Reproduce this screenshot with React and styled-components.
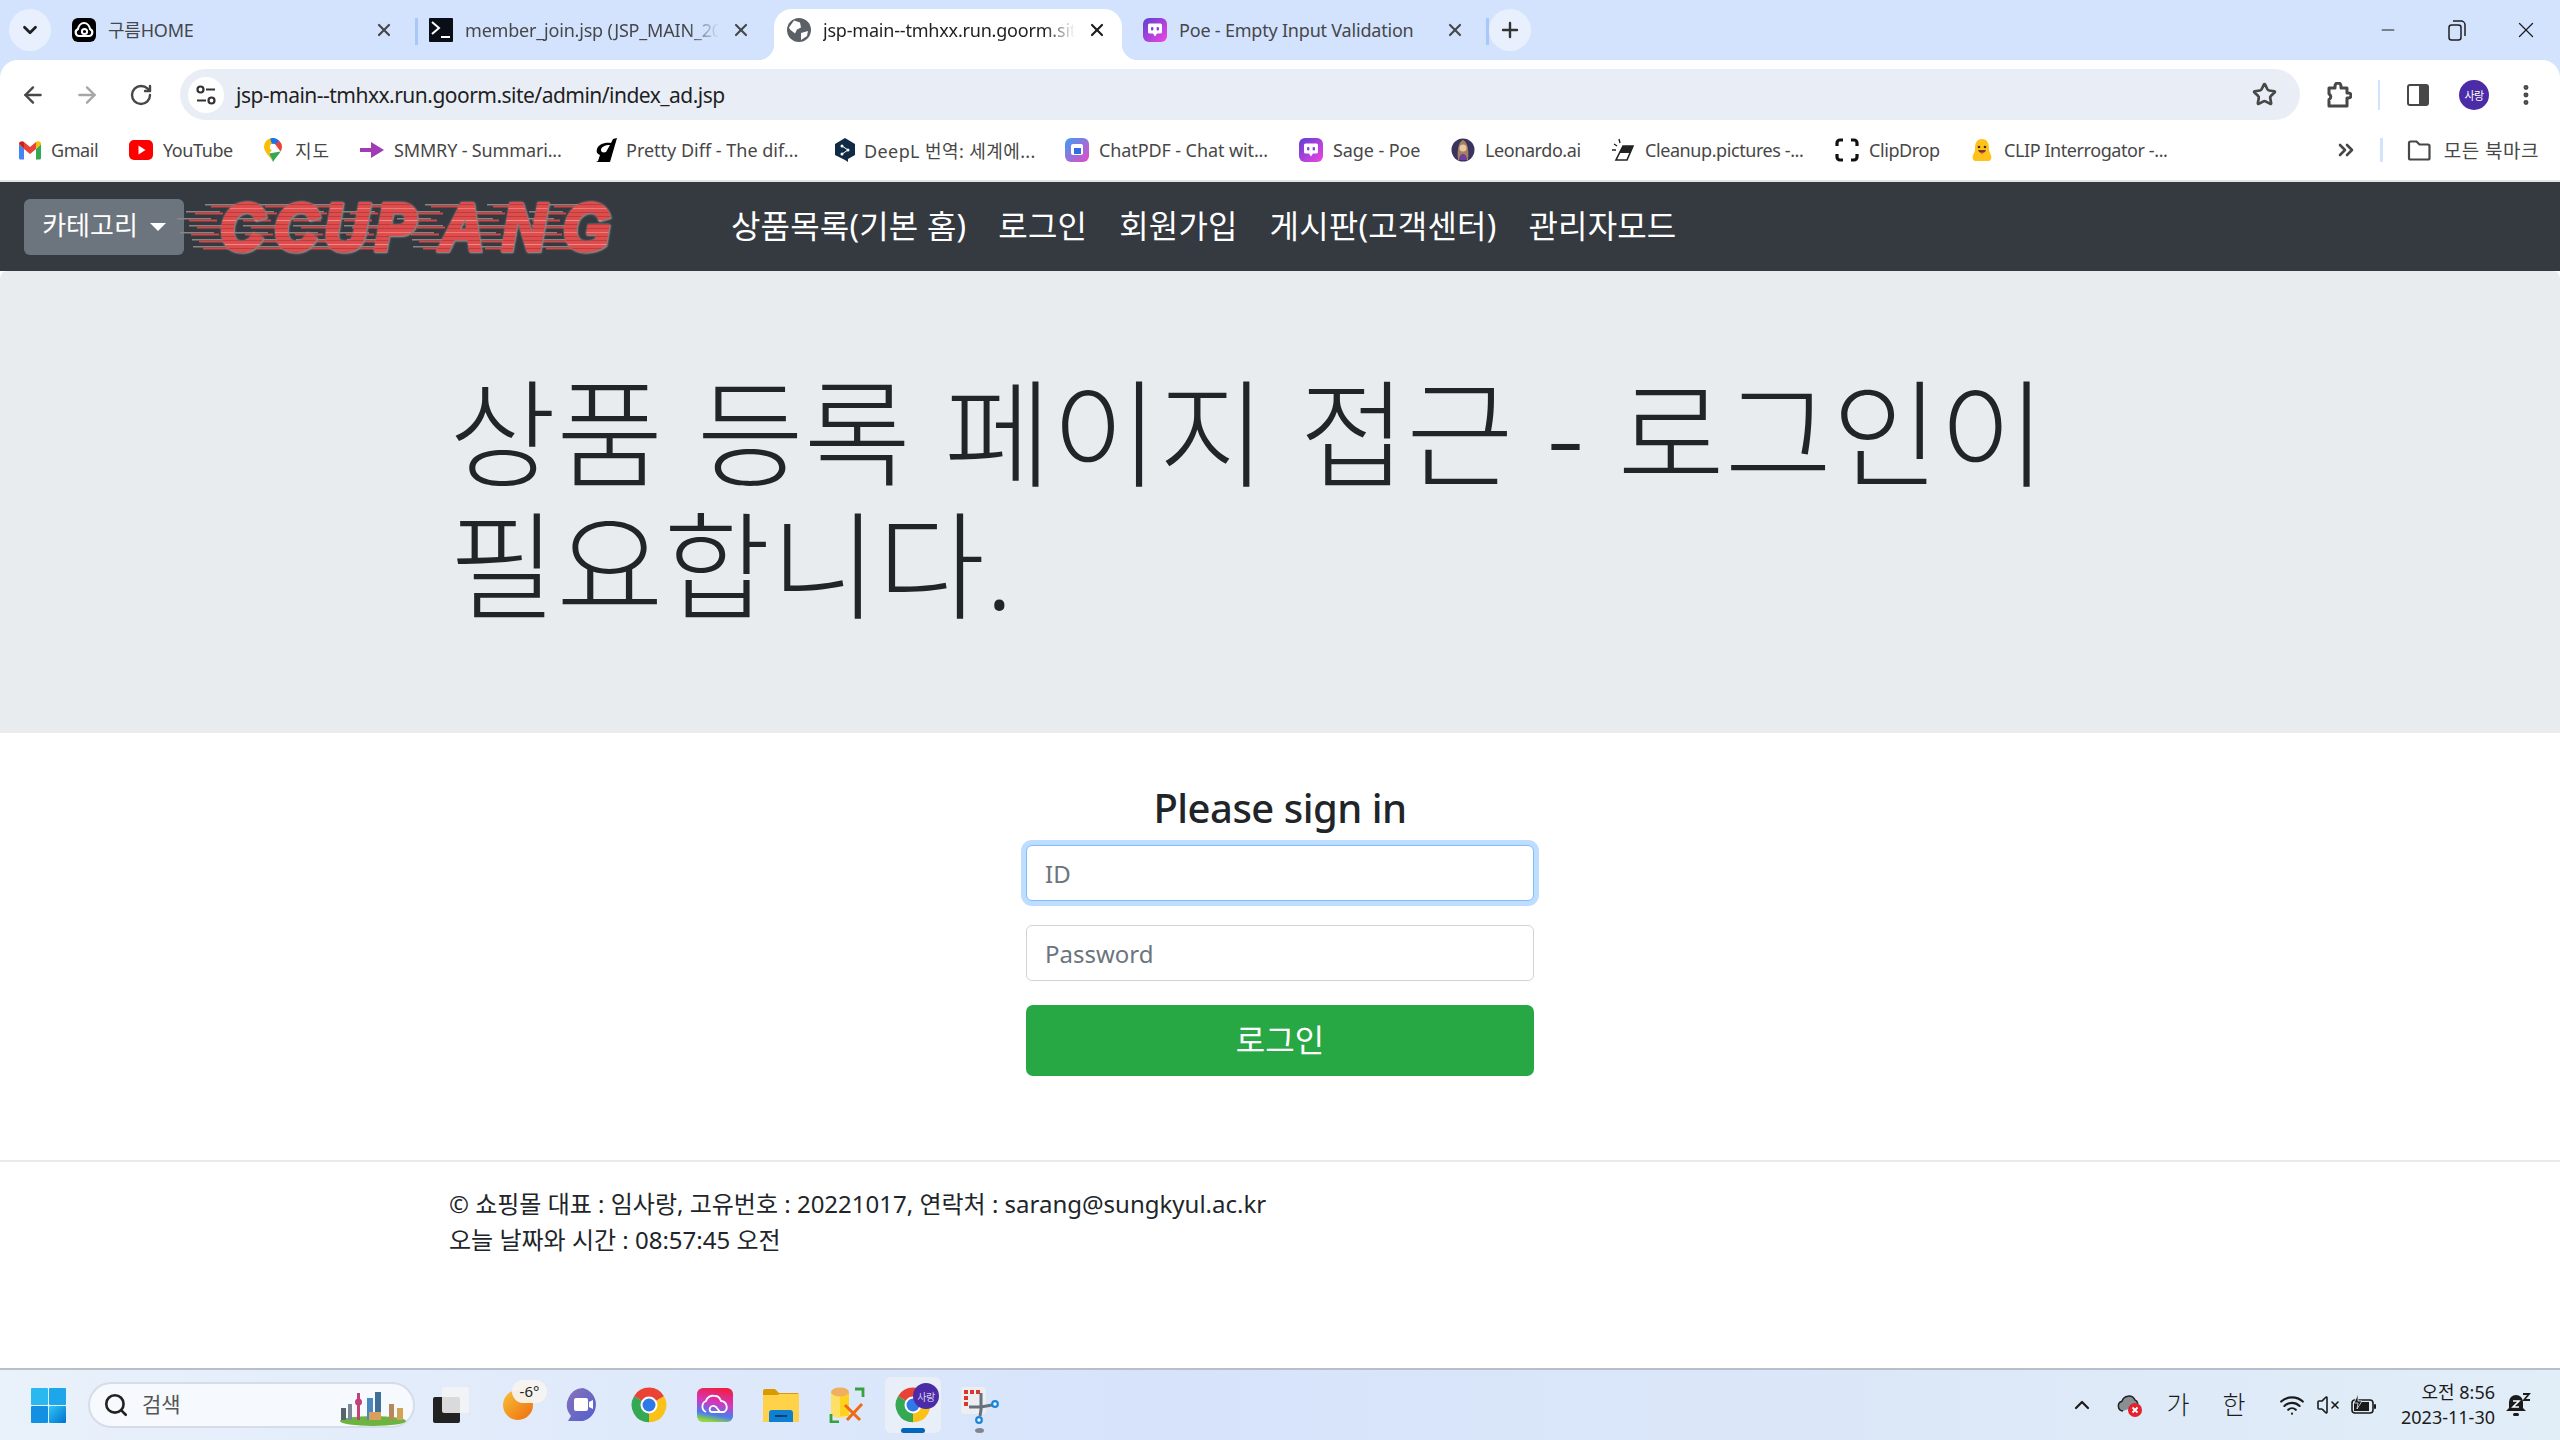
import React from "react";
import styled, { createGlobalStyle } from "styled-components";
import {
  ArrowLeft, ArrowRight, RotateCw, Star, X, Plus, Minus, MoreVertical,
  ChevronsRight, ChevronDown, ChevronUp, Search, Wifi, VolumeX,
} from "lucide-react";

const FONT = `"Noto Sans", "Noto Sans CJK KR", sans-serif`;

const GlobalStyle = createGlobalStyle`
  html, body { margin: 0; padding: 0; background: #fff; }
  * { box-sizing: border-box; }
  body { font-family: ${FONT}; color: #212529; }
`;

const Screen = styled.div`
  width: 2560px;
  height: 1440px;
  display: flex;
  flex-direction: column;
  overflow: hidden;
  background: #d3e3fd;
`;

/* ---------- tab strip ---------- */
const TabStrip = styled.div`
  height: 60px;
  background: #d3e3fd;
  display: flex;
  align-items: flex-end;
  padding-left: 9px;
  flex: none;
`;
const TabSearch = styled.div`
  width: 42px;
  height: 42px;
  margin: 0 7px 9px 0;
  border-radius: 50%;
  background: #e8f0fe;
  display: flex;
  align-items: center;
  justify-content: center;
  color: #1f1f1f;
`;
const Tab = styled.div`
  position: relative;
  z-index: ${p => (p.$active ? 2 : 1)};
  width: ${p => p.$w}px;
  height: 51px;
  padding: 0 ${p => p.$padR || 21}px 9px ${p => p.$pad || 14}px;
  display: flex;
  align-items: center;
  gap: 12px;
  border-radius: 18px 18px 0 0;
  background: ${p => (p.$active ? "#fff" : "transparent")};
  color: ${p => (p.$active ? "#1f1f1f" : "#45474a")};
  font-size: 18px;
  ${p => p.$sep && `
    &::after {
      content: "";
      position: absolute;
      right: -3px;
      top: 9px;
      width: 3px;
      height: 27px;
      background: #a8c7fa;
    }
  `}
  ${p => p.$active && `
    &::before, &::after {
      content: "";
      position: absolute;
      bottom: 0;
      width: 16px;
      height: 16px;
    }
    &::before {
      left: -16px;
      background: radial-gradient(circle at 0 0, transparent 16px, #fff 16.5px);
    }
    &::after {
      right: -16px;
      background: radial-gradient(circle at 100% 0, transparent 16px, #fff 16.5px);
    }
  `}
`;
const TabTitle = styled.span`
  flex: 1;
  min-width: 0;
  line-height: 30px;
  white-space: nowrap;
  overflow: hidden;
  letter-spacing: -0.2px;
  mask-image: ${p => (p.$fade ? "linear-gradient(90deg, #000 88%, transparent)" : "none")};
`;
const NewTab = styled.div`
  width: 42px;
  height: 42px;
  margin: 0 0 9px 3px;
  border-radius: 50%;
  background: #e8f0fe;
  display: flex;
  align-items: center;
  justify-content: center;
  color: #333;
`;
const WindowControls = styled.div`
  margin-left: auto;
  height: 60px;
  display: flex;
  align-items: center;
`;
const WindowButton = styled.div`
  width: 69px;
  display: flex;
  justify-content: center;
  color: #1f1f1f;
`;

/* ---------- toolbar ---------- */
const Toolbar = styled.div`
  height: 60px;
  flex: none;
  background: #fff;
  border-radius: 18px 18px 0 0;
  padding: 9px 0 0 6px;
  display: flex;
  align-items: stretch;
`;
const ToolButton = styled.div`
  width: ${p => p.$w}px;
  display: flex;
  align-items: center;
  justify-content: center;
  color: ${p => p.$color || "#474747"};
  flex: none;
`;
const AddressBar = styled.div`
  margin-left: 12px;
  width: 2120px;
  border-radius: 26px;
  background: #e9eef6;
  display: flex;
  align-items: center;
  padding: 0 8px;
`;
const SiteInfo = styled.div`
  width: 36px;
  height: 36px;
  border-radius: 50%;
  background: #fff;
  display: flex;
  align-items: center;
  justify-content: center;
`;
const Url = styled.div`
  margin-left: 12px;
  font-size: 21px;
  letter-spacing: -0.52px;
  color: #1f1f1f;
  flex: 1;
`;
const ToolSep = styled.div`
  width: 2px;
  height: 30px;
  background: #d3e3fd;
  align-self: center;
  flex: none;
`;
const Avatar = styled.div`
  width: 30px;
  height: 30px;
  border-radius: 50%;
  background: #4b2ca6;
  color: #fff;
  font-size: 11px;
  letter-spacing: -0.5px;
  font-family: "Noto Sans CJK KR", sans-serif;
  display: flex;
  align-items: center;
  justify-content: center;
`;

/* ---------- bookmarks ---------- */
const BookmarkBar = styled.div`
  height: 62px;
  flex: none;
  background: #fff;
  border-bottom: 2px solid #e4e4e4;
  display: flex;
  align-items: center;
  padding-left: 19px;
`;
const Bookmark = styled.div`
  width: ${p => p.$w}px;
  flex: none;
  display: flex;
  align-items: center;
  gap: ${p => p.$gap || 10}px;
  font-size: 18px;
  letter-spacing: ${p => p.$ls ?? -0.42}px;
  color: #474747;
  white-space: nowrap;
`;
const BookmarkRight = styled.div`
  margin-left: auto;
  display: flex;
  align-items: center;
  padding-right: 21px;
  font-size: 19px;
  letter-spacing: 0.5px;
  color: #474747;
`;
const BarSep = styled.div`
  width: 3px;
  height: 24px;
  background: #d3e3fd;
  margin: 0 24px 0 22px;
`;
const BookmarksFolderLabel = styled.span`
  margin-left: 13px;
`;

/* ---------- page ---------- */
const Page = styled.main`
  flex: 1;
  min-height: 0;
  background: #fff;
  display: flex;
  flex-direction: column;
`;
const Navbar = styled.nav`
  height: 89px;
  flex: none;
  background: #343a40;
  display: flex;
  align-items: center;
  padding-left: 24px;
`;
const Dropdown = styled.div`
  width: 160px;
  height: 56px;
  border-radius: 6px;
  background: #6c757d;
  color: #fff;
  font-size: 26px;
  line-height: 50px;
  padding-bottom: 3px;
  display: flex;
  align-items: center;
  justify-content: center;
  gap: 12px;
  flex: none;
  white-space: nowrap;
  &::after {
    content: "";
    border-top: 8px solid #fff;
    border-left: 8px solid transparent;
    border-right: 8px solid transparent;
    margin-top: 4px;
  }
`;
const NavLinks = styled.div`
  margin-left: 119px;
  display: flex;
  gap: 32px;
  padding-bottom: 5px;
`;
const NavLink = styled.a`
  color: #fff;
  font-size: 32px;
  letter-spacing: 0.17px;
  white-space: nowrap;
`;
const Jumbotron = styled.section`
  height: 462px;
  flex: none;
  background: #e9ecef;
  border-radius: 7px 7px 0 0;
  padding: 96px 0 0 449px;
`;
const Heading = styled.h1`
  margin: 0;
  font-size: 116.5px;
  font-weight: 300;
  line-height: 132px;
  word-spacing: 3px;
  white-space: nowrap;
  color: #212529;
`;
const SignIn = styled.form`
  width: 508px;
  margin: 50px auto 0;
  display: flex;
  flex-direction: column;
  align-items: stretch;
`;
const SignTitle = styled.h3`
  margin: 0 0 12px;
  font-size: 40px;
  line-height: 50px;
  font-weight: 550;
  text-align: center;
  letter-spacing: -0.5px;
`;
const Field = styled.input`
  height: 56px;
  margin-bottom: 24px;
  padding: 0 18px;
  font-family: ${FONT};
  font-size: 24px;
  border-radius: 6px;
  outline: none;
  background: #fff;
  border: 1.5px solid ${p => (p.$focused ? "#80bdff" : "#ced4da")};
  box-shadow: ${p => (p.$focused ? "0 0 0 5px #bfdeff" : "none")};
  &::placeholder { color: #6c757d; opacity: 1; }
`;
const SubmitButton = styled.button`
  height: 71px;
  border: none;
  border-radius: 7px;
  background: #28a745;
  color: #fff;
  font-family: ${FONT};
  font-size: 32px;
  padding: 0 0 5px;
`;
const Footer = styled.footer`
  margin-top: 84px;
  border-top: 2px solid #e9e9e9;
  padding: 24px 0 0 449px;
  font-size: 24px;
  line-height: 36px;
  color: #212529;
`;

/* ---------- taskbar ---------- */
const Taskbar = styled.div`
  height: 72px;
  flex: none;
  border-top: 2px solid #b9bfc8;
  background: linear-gradient(90deg, #e9f1fa 0%, #d6e3fb 45%, #dbe7f8 70%, #e1edf7 100%);
  display: flex;
  align-items: center;
  padding-left: 31px;
`;
const SearchPill = styled.div`
  position: relative;
  width: 327px;
  height: 46px;
  margin: 0 3px 0 22px;
  border-radius: 23px;
  background: #f6f9fe;
  border: 2px solid #d5dde8;
  display: flex;
  align-items: center;
  gap: 13px;
  padding-left: 13px;
  font-size: 21px;
  color: #555;
  font-family: "Noto Sans CJK KR", sans-serif;
`;
const SearchLabel = styled.span`
  padding-bottom: 4px;
`;
const SearchArt = styled.div`
  position: absolute;
  right: 6px;
  bottom: 0;
  line-height: 0;
`;
const AppCell = styled.div`
  width: 66px;
  height: 56px;
  display: flex;
  align-items: center;
  justify-content: center;
  position: relative;
`;
const ActiveApp = styled.div`
  width: 56px;
  height: 56px;
  border-radius: 6px;
  background: #e9eff9;
  box-shadow: 0 0 0 1px #dfe6f2;
  display: flex;
  align-items: center;
  justify-content: center;
  position: relative;
  &::after {
    content: "";
    position: absolute;
    left: 16px;
    bottom: 0;
    width: 24px;
    height: 5px;
    border-radius: 3px;
    background: #0067c0;
  }
`;
const OpenDot = styled.span`
  position: absolute;
  bottom: 0;
  left: 29px;
  width: 9px;
  height: 5px;
  border-radius: 50%;
  background: #808690;
`;
const AccountBadge = styled.span`
  position: absolute;
  top: 6px;
  right: 2px;
  width: 26px;
  height: 26px;
  border-radius: 50%;
  background: #4b2ca6;
  color: #d9d0f2;
  font-size: 10px;
  letter-spacing: -0.5px;
  font-family: "Noto Sans CJK KR", sans-serif;
  display: flex;
  align-items: center;
  justify-content: center;
`;
const Tray = styled.div`
  margin-left: auto;
  display: flex;
  align-items: center;
  padding-right: 19px;
`;
const TrayCell = styled.div`
  width: ${p => p.$w}px;
  flex: none;
  display: flex;
  align-items: center;
  justify-content: center;
  color: #1b1b1b;
  font-size: 25px;
  font-family: "Noto Sans CJK KR", sans-serif;
  font-weight: 300;
  padding-bottom: ${p => p.$up || 0}px;
`;
const Clock = styled.div`
  width: 113px;
  flex: none;
  text-align: right;
  font-size: 18px;
  line-height: 25px;
  color: #1b1b1b;
`;

/* ---------- drawn icons ---------- */
const TuneIcon = () => (
  <svg width="20" height="22" viewBox="0 0 20 22" fill="none" stroke="#333" strokeWidth="2.200">
    <circle cx="4.500" cy="5.500" r="3" />
    <path d="M10 5.500h9M1 16.500h9" />
    <circle cx="15.500" cy="16.500" r="3" />
  </svg>
);
const GoormIcon = () => (
  <svg width="24" height="24" viewBox="0 0 24 24">
    <rect width="24" height="24" rx="6" fill="#000" />
    <path d="M7 18a3.500 3.500 0 0 1-1.200-6.700C6.500 8 9 5 12 5s5.500 3 6.200 6.300A3.500 3.500 0 0 1 17 18z" fill="none" stroke="#fff" strokeWidth="2.200" />
    <circle cx="12.500" cy="13.500" r="2.600" fill="none" stroke="#fff" strokeWidth="2" />
  </svg>
);
const ConsoleIcon = () => (
  <svg width="24" height="24" viewBox="0 0 24 24">
    <rect width="24" height="24" rx="1" fill="#0a0f17" />
    <path d="M3 4l7 6-7 6" fill="none" stroke="#fff" strokeWidth="2" />
    <rect x="12" y="18" width="9" height="2" fill="#fff" />
  </svg>
);
const GlobeIcon = () => (
  <svg width="24" height="24" viewBox="0 0 24 24">
    <circle cx="12" cy="12" r="12" fill="#5b5f66" />
    <path d="M7 2.500l6 2 1 5-4 2-2 4-5-4-1-2zM14 15l7-2-1 5-6 4z" fill="#fff" />
  </svg>
);
const PoeIcon = ({ id = "poeG" }) => (
  <svg width="24" height="24" viewBox="0 0 24 24">
    <defs>
      <linearGradient id={id} x1="0" y1="0" x2="1" y2="1">
        <stop offset="0" stopColor="#5d3fd3" />
        <stop offset="1" stopColor="#f045e0" />
      </linearGradient>
    </defs>
    <rect width="24" height="24" rx="6" fill={`url(#${id})`} />
    <path d="M5 7a1.500 1.500 0 0 1 1.500-1.500h11A1.500 1.500 0 0 1 19 7v7a1.500 1.500 0 0 1-1.500 1.500H14L12 18.500 10 15.500H6.500A1.500 1.500 0 0 1 5 14z" fill="#fff" />
    <rect x="8" y="9" width="2.400" height="3.400" rx="1" fill="#8a3fe0" />
    <rect x="13.600" y="9" width="2.400" height="3.400" rx="1" fill="#8a3fe0" />
  </svg>
);
const GmailIcon = () => (
  <svg width="22" height="24" viewBox="0 0 22 20">
    <path d="M0 4v14a1.500 1.500 0 0 0 1.500 1.500H5V9z" fill="#4285f4" />
    <path d="M22 4v14a1.500 1.500 0 0 1-1.500 1.500H17V9z" fill="#34a853" />
    <path d="M5 9V2l6 5 6-5v7l-6 5z" fill="#ea4335" />
    <path d="M0 4c0-2.500 3-3.500 5-2v7z" fill="#c5221f" />
    <path d="M22 4c0-2.500-3-3.500-5-2v7z" fill="#fbbc04" />
  </svg>
);
const YoutubeIcon = () => (
  <svg width="24" height="24" viewBox="0 0 24 24">
    <rect y="2" width="24" height="20" rx="5" fill="#f00" />
    <path d="M9.500 7.500v9l7-4.500z" fill="#fff" />
  </svg>
);
const MapsIcon = () => (
  <svg width="18" height="24" viewBox="0 0 18 24">
    <path d="M9 24C6 18 0 14 0 9a9 9 0 0 1 6-8.500l6 7-7 8c1.500 2.500 3 5 4 8.500z" fill="#fbbc04" />
    <path d="M6 .5A9 9 0 0 1 15.500 3L12 7 8 6z" fill="#1a73e8" />
    <path d="M15.500 3A9 9 0 0 1 18 9c0 1.500-.5 3-1.500 4.500L11 6z" fill="#ea4335" />
    <path d="M5 15.500l11.500-2C15 17 11 20 9 24c-1-3.500-2.500-6-4-8.500z" fill="#34a853" />
    <circle cx="9" cy="9" r="3.200" fill="#fff" />
  </svg>
);
const SmmryIcon = () => (
  <svg width="24" height="24" viewBox="0 0 24 24">
    <path d="M0 10h11V4l13 8-13 8v-6H0z" fill="#a13ab5" />
  </svg>
);
const PrettyDiffIcon = () => (
  <svg width="24" height="24" viewBox="0 0 24 24">
    <path d="M18 1l4-1-7 24H1l2-1 2-6c-3-1-4-3-3-6 1-4 7-7 14-6zM15 7c-5 0-9 2-9 5 0 2 2 3 5 2z" fill="#000" />
  </svg>
);
const DeeplIcon = () => (
  <svg width="24" height="24" viewBox="0 0 24 24">
    <path d="M12 0l10 6v11l-7 4v3l-3-2-10-5V6z" fill="#0f2b46" />
    <circle cx="9" cy="8" r="1.500" fill="#fff" />
    <circle cx="9" cy="16" r="1.500" fill="#fff" />
    <circle cx="15" cy="12" r="1.500" fill="#fff" />
    <path d="M9 8l6 4-6 4" fill="none" stroke="#fff" strokeWidth="1" />
  </svg>
);
const ChatPdfIcon = () => (
  <svg width="24" height="24" viewBox="0 0 24 24">
    <defs>
      <linearGradient id="cpG" x1="0" y1="0" x2="1" y2="1">
        <stop offset="0" stopColor="#3aa0f5" />
        <stop offset="1" stopColor="#e848c4" />
      </linearGradient>
    </defs>
    <rect width="24" height="24" rx="6" fill="url(#cpG)" />
    <rect x="6" y="6" width="12" height="11" rx="2" fill="#fff" />
    <rect x="9" y="10" width="7" height="6" fill="#2f6fe0" />
  </svg>
);
const LeonardoIcon = () => (
  <svg width="24" height="24" viewBox="0 0 24 24">
    <circle cx="12" cy="12" r="11.500" fill="#3b3260" />
    <path d="M7 22c-1-8 0-18 5-20 5 2 6 12 5 20z" fill="#a5835a" />
    <circle cx="12" cy="10" r="3.500" fill="#e7c9a9" />
    <path d="M8 22c0-4 2-6 4-6s4 2 4 6z" fill="#6c3fa0" />
  </svg>
);
const EraserIcon = () => (
  <svg width="24" height="24" viewBox="0 0 24 24">
    <path d="M12 8h10l-6 14H5z" fill="#fff" stroke="#222" strokeWidth="1.600" />
    <path d="M12 8h10l-3 7H8z" fill="#222" />
    <path d="M3 6l3 2M8 1l1 4M1 12h4" stroke="#222" strokeWidth="1.400" />
  </svg>
);
const ClipDropIcon = () => (
  <svg width="24" height="24" viewBox="0 0 24 24" fill="none" stroke="#111" strokeWidth="3.200">
    <path d="M2 8V5a3 3 0 0 1 3-3h3M16 2h3a3 3 0 0 1 3 3v3M22 16v3a3 3 0 0 1-3 3h-3M8 22H5a3 3 0 0 1-3-3v-3" />
  </svg>
);
const HuggingIcon = () => (
  <svg width="24" height="24" viewBox="0 0 24 24">
    <path d="M12 1c5 0 7 4 7 9 0 2 0 3 1 5 2 3 2 7-1 8H5c-3-1-3-5-1-8 1-2 1-3 1-5 0-5 2-9 7-9z" fill="#ffc21a" />
    <circle cx="9" cy="9" r="1.300" fill="#333" />
    <circle cx="15" cy="9" r="1.300" fill="#333" />
    <path d="M8 12c1 4 7 4 8 0z" fill="#7a3b1e" />
    <path d="M10.500 14.500h3l-1.500 2z" fill="#f05060" />
  </svg>
);
const PuzzleIcon = () => (
  <svg width="26" height="26" viewBox="0 0 26 26" fill="none" stroke="#474747" strokeWidth="3">
    <path d="M3 6h6V4a3 3 0 0 1 6 0v2h6v5h1.500a2.500 2.500 0 0 1 0 5H21v8H3v-6.500a3 3 0 0 0 0-5.500z" strokeLinejoin="round" />
  </svg>
);
const SidePanelIcon = () => (
  <svg width="22" height="22" viewBox="0 0 22 22">
    <rect x="1" y="1" width="20" height="20" rx="2" fill="#fff" stroke="#474747" strokeWidth="2" />
    <rect x="12" y="1" width="9" height="20" fill="#474747" />
  </svg>
);
const FolderOutline = () => (
  <svg width="24" height="24" viewBox="0 0 24 24" fill="none" stroke="#474747" strokeWidth="2.200">
    <path d="M2 5a1.500 1.500 0 0 1 1.500-1.500h6l3 3H21A1.500 1.500 0 0 1 22.500 8v12a1.500 1.500 0 0 1-1.500 1.500H3.500A1.500 1.500 0 0 1 2 20z" />
  </svg>
);

const LOGO_X = [31, 85, 135, 186, 251, 313, 374];
const LOGO_ROWS = [3, 10, 17, 24, 31, 38, 45];
const LOGO_SCALE = 0.92;

const Logo = () => (
  <svg width="420" height="52" viewBox="0 0 420 52" overflow="visible" style={{ marginLeft: 8, flex: "none" }}>
    <defs>
      <pattern id="logoStripes" width="8" height="24" patternUnits="userSpaceOnUse">
        <rect width="8" height="24" fill="#dd4d4d" />
        <rect y="3" width="8" height="1" fill="#bd3d3d" />
        <rect y="7" width="8" height="1" fill="#ee7b78" />
        <rect y="11" width="8" height="1" fill="#bd3d3d" />
        <rect y="15" width="8" height="1" fill="#bd3d3d" />
        <rect y="19" width="8" height="1" fill="#f28b88" />
        <rect y="23" width="8" height="1" fill="#bd3d3d" />
      </pattern>
    </defs>
    {LOGO_X.map((x, i) =>
      LOGO_ROWS.map((y, j) => (
        <g key={`${i}-${j}`}>
          <rect x={x - 28 - ((j * 3) % 7) * 3 + (j === 0 || j === 6 ? 10 : 0)} y={y} width={34} height="1.500" fill="#8a8484" />
          <rect x={x - 22 - ((j * 3) % 7) * 2 + (j === 0 || j === 6 ? 10 : 0)} y={y + 1.500} width={28} height="2" fill="#cf4747" />
        </g>
      ))
    )}
    <text
      y="49"
      fontFamily="'Liberation Sans', sans-serif"
      fontWeight="700"
      fontStyle="italic"
      fontSize="66"
      transform={`scale(${LOGO_SCALE} 1)`}
      x={LOGO_X.map(x => (x - 3) / LOGO_SCALE).join(" ")}
      fill="url(#logoStripes)"
      stroke="url(#logoStripes)"
      strokeWidth="4"
      style={{ filter: "drop-shadow(0 0 1px #8d8080) drop-shadow(1px 1px 0 #8d8080)" }}
    >
      CCUPANG
    </text>
  </svg>
);

const WinLogo = () => (
  <svg width="35" height="35" viewBox="0 0 35 35" style={{ flex: "none" }}>
    <defs>
      <linearGradient id="winG" x1="0" y1="0" x2="1" y2="1">
        <stop offset="0" stopColor="#2fc6f5" />
        <stop offset="1" stopColor="#0070d0" />
      </linearGradient>
    </defs>
    <rect width="17" height="17" rx="1" fill="#29b8f0" />
    <rect x="18" width="17" height="17" rx="1" fill="#1da7ea" />
    <rect y="18" width="17" height="17" rx="1" fill="#1390e2" />
    <rect x="18" y="18" width="17" height="17" rx="1" fill="url(#winG)" />
  </svg>
);
const CityArt = () => (
  <svg width="68" height="36" viewBox="0 0 68 36">
    <ellipse cx="34" cy="31" rx="33" ry="5" fill="#6cb33f" />
    <rect x="2" y="18" width="5" height="12" fill="#59636e" />
    <rect x="9" y="14" width="4" height="16" fill="#7a8794" />
    <rect x="18" y="3" width="3" height="27" fill="#c2417a" />
    <circle cx="19.500" cy="12" r="3.500" fill="#c2417a" />
    <rect x="28" y="8" width="6" height="22" fill="#4a88c0" />
    <rect x="36" y="2" width="6" height="28" fill="#3f6f96" />
    <rect x="30" y="22" width="12" height="8" fill="#d8a05a" />
    <rect x="50" y="14" width="5" height="16" fill="#b6885a" />
    <rect x="58" y="18" width="6" height="12" fill="#d3a354" />
  </svg>
);
const TaskViewIcon = () => (
  <svg width="36" height="36" viewBox="0 0 36 36">
    <rect x="0" y="10" width="27" height="26" rx="2" fill="#222" />
    <rect x="9" y="0" width="27" height="26" rx="2" fill="#f4f4f4" opacity=".88" />
  </svg>
);
const WeatherIcon = () => (
  <svg width="66" height="56" viewBox="0 0 66 56">
    <defs>
      <linearGradient id="wxG" x1="0" y1="0" x2="1" y2="1">
        <stop offset="0" stopColor="#f6c23a" />
        <stop offset="1" stopColor="#ef6c0c" />
      </linearGradient>
    </defs>
    <circle cx="34" cy="28" r="15" fill="url(#wxG)" />
    <rect x="28" y="3" width="35" height="23" rx="11.500" fill="#f5f4f0" opacity=".94" />
    <text x="45.500" y="20" fontSize="15" textAnchor="middle" fill="#222" fontFamily="'Noto Sans', sans-serif">-6°</text>
  </svg>
);
const MeetIcon = () => (
  <svg width="36" height="36" viewBox="0 0 36 36">
    <defs>
      <linearGradient id="mtG" x1="0" y1="0" x2="1" y2="1">
        <stop offset="0" stopColor="#8a72b8" />
        <stop offset="1" stopColor="#4f5fd0" />
      </linearGradient>
    </defs>
    <path d="M18 1a17 17 0 0 1 0 33H3l3-5A17 17 0 0 1 18 1z" fill="url(#mtG)" />
    <rect x="9" y="11" width="14" height="13" rx="2" fill="#fff" />
    <path d="M24 15l4-2v9l-4-2z" fill="#fff" />
  </svg>
);
const ChromeIcon = () => (
  <svg width="36" height="36" viewBox="0 0 36 36">
    <path d="M18 18L3 9.300A17.300 17.300 0 0 1 33 9.300z" fill="#ea4335" />
    <path d="M18 18L3 9.300A17.300 17.300 0 0 0 18 35.300z" fill="#34a853" />
    <path d="M18 18L33 9.300A17.300 17.300 0 0 1 18 35.300z" fill="#fbc116" />
    <circle cx="18" cy="18" r="8.500" fill="#fff" />
    <circle cx="18" cy="18" r="6.500" fill="#2f78e8" />
  </svg>
);
const CreativeIcon = () => (
  <svg width="36" height="34" viewBox="0 0 36 34">
    <defs>
      <linearGradient id="ccG" x1="0.7" y1="0" x2="0.5" y2="1">
        <stop offset="0" stopColor="#f21d3c" />
        <stop offset=".45" stopColor="#d337c0" />
        <stop offset=".8" stopColor="#4a7df0" />
        <stop offset="1" stopColor="#8fd838" />
      </linearGradient>
    </defs>
    <rect width="36" height="34" rx="6" fill="url(#ccG)" />
    <path d="M9 24a6 6 0 0 1 0-11c1-4 5-6 9-5 3 0 5 2 6 5a6 6 0 0 1 3 11H15c-2 0-3-2-2-4s3-3 6-1l4 5" fill="none" stroke="#fff" strokeWidth="1.800" />
  </svg>
);
const FilesIcon = () => (
  <svg width="36" height="33" viewBox="0 0 36 33">
    <path d="M0 2a2 2 0 0 1 2-2h10l4 4h18a2 2 0 0 1 2 2v6H0z" fill="#d99a00" />
    <path d="M0 6h14l3-1h19v28H0z" fill="#ffd24a" />
    <path d="M6 24a3 3 0 0 1 3-3h18a3 3 0 0 1 3 3v9H6z" fill="#0f7fd1" />
    <rect x="12" y="26" width="12" height="2" fill="#063f72" />
  </svg>
);
const ToysIcon = () => (
  <svg width="36" height="36" viewBox="0 0 36 36">
    <path d="M2 5h18v21a9 5 0 0 1-18 0z" fill="#ffe066" />
    <rect x="11" y="5" width="9" height="24" fill="#ffd21e" />
    <ellipse cx="11" cy="5" rx="9" ry="4.500" fill="#eeb060" />
    <path d="M26 2h8v8M2 27v8h8" fill="none" stroke="#37a13e" strokeWidth="2.800" />
    <path d="M16 18l15 15M33 17L18 33" stroke="#ef6a12" strokeWidth="3" />
  </svg>
);
const SnipIcon = () => (
  <svg width="40" height="40" viewBox="0 0 40 40">
    <rect x="2" y="2" width="25" height="27" rx="3" fill="#eceef1" />
    <rect x="5" y="5" width="4" height="4" fill="#d8382e" />
    <rect x="11" y="5" width="4" height="4" fill="#d8382e" />
    <rect x="17" y="5" width="4" height="4" fill="#d8382e" />
    <rect x="5" y="11" width="4" height="4" fill="#d8382e" />
    <rect x="5" y="17" width="4" height="4" fill="#d8382e" />
    <path d="M10 22h12l11-2" fill="none" stroke="#68707a" strokeWidth="3" />
    <path d="M22 8v17l-1 6" fill="none" stroke="#68707a" strokeWidth="3" />
    <circle cx="36" cy="19" r="2.800" fill="#fff" stroke="#1a86d9" strokeWidth="2.200" />
    <circle cx="20" cy="35" r="2.800" fill="#fff" stroke="#1a86d9" strokeWidth="2.200" />
  </svg>
);
const CloudErrorIcon = () => (
  <svg width="26" height="26" viewBox="0 0 26 26">
    <path d="M6 19a5 5 0 0 1-1-9.800A7 7 0 0 1 18 8a4 4 0 0 1 2 6" fill="#8a8f94" stroke="#222" strokeWidth="1.500" />
    <circle cx="18" cy="18" r="7" fill="#e0232e" />
    <path d="M15.500 15.500l5 5m0-5l-5 5" stroke="#fff" strokeWidth="1.800" />
  </svg>
);
const BatteryIcon = () => (
  <svg width="26" height="22" viewBox="0 0 26 22">
    <rect x="1" y="6" width="21" height="13" rx="3" fill="none" stroke="#1b1b1b" strokeWidth="1.600" />
    <rect x="3" y="8" width="15" height="9" fill="#1b1b1b" />
    <rect x="23" y="10" width="2" height="5" rx="1" fill="#1b1b1b" />
    <path d="M7 0L3 9h4l-1 6 5-8H7z" fill="#1b1b1b" stroke="#e0ecf7" strokeWidth=".8" />
  </svg>
);
const BellSleepIcon = () => (
  <svg width="26" height="26" viewBox="0 0 26 26">
    <path d="M11 3a7 7 0 0 1 7 7v6l3 3H1l3-3v-6a7 7 0 0 1 7-7z" fill="#1b1b1b" />
    <rect x="8" y="21" width="6" height="3" rx="1.500" fill="#1b1b1b" />
    <path d="M8 9h6l-6 6h6" fill="none" stroke="#fff" strokeWidth="1.600" />
    <path d="M18 2h6l-5 6h6" fill="none" stroke="#1b1b1b" strokeWidth="1.800" />
  </svg>
);

const BOOKMARKS = [
  { w: 110, icon: <GmailIcon />, label: "Gmail" },
  { w: 135, icon: <YoutubeIcon />, label: "YouTube" },
  { w: 96, icon: <MapsIcon />, label: "지도", gap: 13, ls: 1 },
  { w: 235, icon: <SmmryIcon />, label: "SMMRY - Summari...", ls: -0.15 },
  { w: 238, icon: <PrettyDiffIcon />, label: "Pretty Diff - The dif...", gap: 7, ls: 0 },
  { w: 232, icon: <DeeplIcon />, label: "DeepL 번역: 세계에...", gap: 7, ls: 0.4 },
  { w: 234, icon: <ChatPdfIcon />, label: "ChatPDF - Chat wit...", ls: -0.1 },
  { w: 152, icon: <PoeIcon id="poeSage" />, label: "Sage - Poe", ls: -0.1 },
  { w: 160, icon: <LeonardoIcon />, label: "Leonardo.ai" },
  { w: 224, icon: <EraserIcon />, label: "Cleanup.pictures -..." },
  { w: 135, icon: <ClipDropIcon />, label: "ClipDrop" },
  { w: 300, icon: <HuggingIcon />, label: "CLIP Interrogator -..." },
];

const NAV = ["상품목록(기본 홈)", "로그인", "회원가입", "게시판(고객센터)", "관리자모드"];

export default function App() {
  return (
    <Screen>
      <GlobalStyle />
      <TabStrip>
        <TabSearch><ChevronDown size={22} strokeWidth={3} /></TabSearch>
        <Tab $w={357} $sep>
          <GoormIcon />
          <TabTitle>구름HOME</TabTitle>
          <X size={20} strokeWidth={2.6} />
        </Tab>
        <Tab $w={359} $padR={23}>
          <ConsoleIcon />
          <TabTitle $fade>member_join.jsp (JSP_MAIN_2023)</TabTitle>
          <X size={20} strokeWidth={2.6} />
        </Tab>
        <Tab $w={348} $pad={13} $padR={15} $active>
          <GlobeIcon />
          <TabTitle $fade>jsp-main--tmhxx.run.goorm.site</TabTitle>
          <X size={20} strokeWidth={2.6} />
        </Tab>
        <Tab $w={364} $pad={21} $sep>
          <PoeIcon />
          <TabTitle>Poe - Empty Input Validation</TabTitle>
          <X size={20} strokeWidth={2.6} />
        </Tab>
        <NewTab><Plus size={24} strokeWidth={2.4} /></NewTab>
        <WindowControls>
          <WindowButton><Minus size={20} strokeWidth={1.4} /></WindowButton>
          <WindowButton>
            <svg width="20" height="22" viewBox="0 0 20 22" fill="none" stroke="#1f1f1f" strokeWidth="1.500">
              <rect x="2" y="6" width="12" height="15" rx="2.500" />
              <path d="M6 2h8a4 4 0 0 1 4 4v11" />
            </svg>
          </WindowButton>
          <WindowButton><X size={26} strokeWidth={1.2} /></WindowButton>
        </WindowControls>
      </TabStrip>

      <Toolbar>
        <ToolButton $w={54}><ArrowLeft size={26} strokeWidth={2.2} /></ToolButton>
        <ToolButton $w={54} $color="#a6a6a6"><ArrowRight size={26} strokeWidth={2.2} /></ToolButton>
        <ToolButton $w={54}><RotateCw size={24} strokeWidth={2.4} /></ToolButton>
        <AddressBar>
          <SiteInfo><TuneIcon /></SiteInfo>
          <Url>jsp-main--tmhxx.run.goorm.site/admin/index_ad.jsp</Url>
          <Star size={25} strokeWidth={2.6} color="#474747" style={{ marginRight: 15 }} />
        </AddressBar>
        <ToolButton $w={78}><PuzzleIcon /></ToolButton>
        <ToolSep />
        <ToolButton $w={76}><SidePanelIcon /></ToolButton>
        <ToolButton $w={36}><Avatar>사랑</Avatar></ToolButton>
        <ToolButton $w={68}><MoreVertical size={26} strokeWidth={2.6} /></ToolButton>
      </Toolbar>

      <BookmarkBar>
        {BOOKMARKS.map(b => (
          <Bookmark key={b.label} $w={b.w} $gap={b.gap} $ls={b.ls}>
            {b.icon}
            <span>{b.label}</span>
          </Bookmark>
        ))}
        <BookmarkRight>
          <ChevronsRight size={24} strokeWidth={2.6} />
          <BarSep />
          <FolderOutline />
          <BookmarksFolderLabel>모든 북마크</BookmarksFolderLabel>
        </BookmarkRight>
      </BookmarkBar>

      <Page>
        <Navbar>
          <Dropdown>카테고리</Dropdown>
          <Logo />
          <NavLinks>
            {NAV.map(n => <NavLink key={n}>{n}</NavLink>)}
          </NavLinks>
        </Navbar>
        <Jumbotron>
          <Heading>상품 등록 페이지 접근 - 로그인이<br />필요합니다.</Heading>
        </Jumbotron>
        <SignIn>
          <SignTitle>Please sign in</SignTitle>
          <Field placeholder="ID" $focused readOnly />
          <Field placeholder="Password" type="password" readOnly />
          <SubmitButton type="button">로그인</SubmitButton>
        </SignIn>
        <Footer>
          <div>© 쇼핑몰 대표 : 임사랑, 고유번호 : 20221017, 연락처 : sarang@sungkyul.ac.kr</div>
          <div>오늘 날짜와 시간 : 08:57:45 오전</div>
        </Footer>
      </Page>

      <Taskbar>
        <WinLogo />
        <SearchPill>
          <Search size={26} strokeWidth={2.4} color="#222" />
          <SearchLabel>검색</SearchLabel>
          <SearchArt><CityArt /></SearchArt>
        </SearchPill>
        <AppCell><TaskViewIcon /></AppCell>
        <AppCell><WeatherIcon /></AppCell>
        <AppCell><MeetIcon /></AppCell>
        <AppCell><ChromeIcon /></AppCell>
        <AppCell><CreativeIcon /></AppCell>
        <AppCell><FilesIcon /></AppCell>
        <AppCell><ToysIcon /></AppCell>
        <AppCell>
          <ActiveApp>
            <ChromeIcon />
            <AccountBadge>사랑</AccountBadge>
          </ActiveApp>
        </AppCell>
        <AppCell><SnipIcon /><OpenDot /></AppCell>
        <Tray>
          <TrayCell $w={48}><ChevronUp size={24} strokeWidth={2.2} /></TrayCell>
          <TrayCell $w={48}><CloudErrorIcon /></TrayCell>
          <TrayCell $w={48} $up={4}>가</TrayCell>
          <TrayCell $w={64} $up={4}>한</TrayCell>
          <TrayCell $w={8} />
          <TrayCell $w={36}><Wifi size={26} strokeWidth={2} /></TrayCell>
          <TrayCell $w={36}><VolumeX size={24} strokeWidth={1.6} /></TrayCell>
          <TrayCell $w={36}><BatteryIcon /></TrayCell>
          <Clock>
            <div>오전 8:56</div>
            <div>2023-11-30</div>
          </Clock>
          <TrayCell $w={46}><BellSleepIcon /></TrayCell>
        </Tray>
      </Taskbar>
    </Screen>
  );
}
